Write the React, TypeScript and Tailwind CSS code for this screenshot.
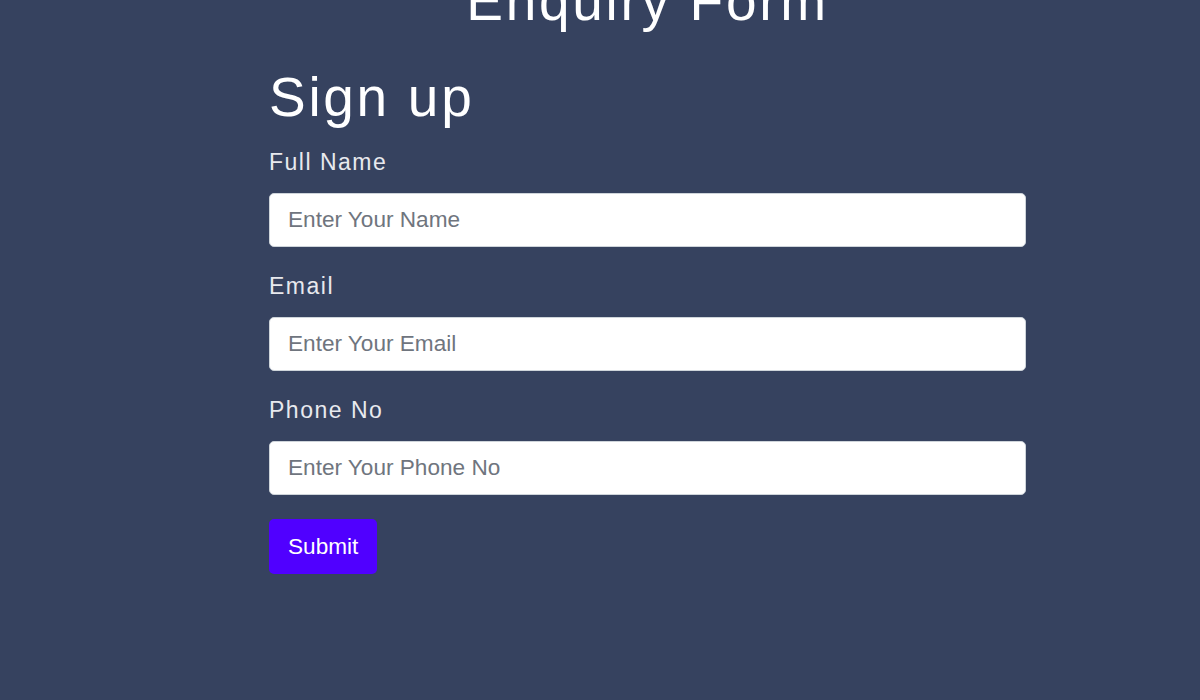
import React from 'react';

const fields = [
    { id: 'name', label: 'Full Name', placeholder: 'Enter Your Name', type: 'text' },
    { id: 'email', label: 'Email', placeholder: 'Enter Your Email', type: 'email' },
    { id: 'phone', label: 'Phone No', placeholder: 'Enter Your Phone No', type: 'tel' },
];

const App = () => {
    return (
        <div className="min-h-screen w-full bg-[#36425f] font-['Liberation_Sans',Arial,sans-serif] overflow-hidden">
            <div className="ml-[269px] w-[757px] flex flex-col">
                {/* Page title (scrolled partly out of view) */}
                <h1 className="-mt-[30px] text-center text-white text-[55px] tracking-[2.7px] leading-[63px]">
                    Enquiry Form
                </h1>

                <form className="mt-[33px] flex flex-col" onSubmit={(e) => e.preventDefault()}>
                    <h2 className="text-white text-[55px] tracking-[2.7px] leading-[63px] mb-[20px]">
                        Sign up
                    </h2>

                    {fields.map((field) => (
                        <div key={field.id} className="flex flex-col mb-[26px]">
                            <label
                                htmlFor={field.id}
                                className="text-[#e8e9ee] text-[23px] tracking-[1.5px] leading-[26px] mb-[18px]"
                            >
                                {field.label}
                            </label>
                            <input
                                id={field.id}
                                type={field.type}
                                placeholder={field.placeholder}
                                className="h-[54px] w-full rounded-[5px] border border-[#ced4da] bg-white px-[18px] text-[22.6px] tracking-normal text-[#212529] placeholder:text-[#6f757e] outline-none"
                            />
                        </div>
                    ))}

                    <div className="-mt-[2px]">
                        <button
                            type="submit"
                            className="h-[55px] rounded-[5px] bg-[#5000ff] px-[19px] text-[22.6px] tracking-normal text-white"
                        >
                            Submit
                        </button>
                    </div>
                </form>
            </div>
        </div>
    );
};

export default App;
